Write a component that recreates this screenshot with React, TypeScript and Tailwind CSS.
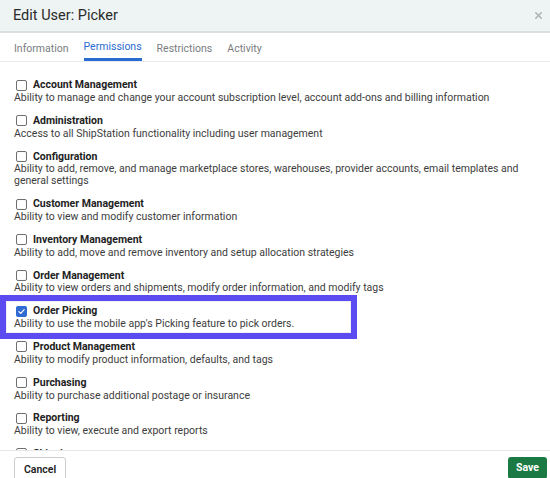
import { X } from "lucide-react";

const permissions = [
  {
    title: "Account Management",
    desc: "Ability to manage and change your account subscription level, account add-ons and billing information",
  },
  { title: "Administration", desc: "Access to all ShipStation functionality including user management" },
  {
    title: "Configuration",
    desc: "Ability to add, remove, and manage marketplace stores, warehouses, provider accounts, email templates and general settings",
  },
  { title: "Customer Management", desc: "Ability to view and modify customer information" },
  { title: "Inventory Management", desc: "Ability to add, move and remove inventory and setup allocation strategies" },
  {
    title: "Order Management",
    desc: "Ability to view orders and shipments, modify order information, and modify tags",
  },
  {
    title: "Order Picking",
    desc: "Ability to use the mobile app's Picking feature to pick orders.",
    checked: true,
    highlight: true,
  },
  { title: "Product Management", desc: "Ability to modify product information, defaults, and tags" },
  { title: "Purchasing", desc: "Ability to purchase additional postage or insurance" },
  { title: "Reporting", desc: "Ability to view, execute and export reports" },
  { title: "Shipping", desc: "Ability to create labels and ship orders" },
];

const tabs = ["Information", "Permissions", "Restrictions", "Activity"];

const Checkbox = ({ checked }: { checked?: boolean }) =>
  checked ? (
    <span className="flex h-[11px] w-[11px] items-center justify-center rounded-[2px] bg-[#2f6bd3]">
      <svg viewBox="0 0 12 12" className="h-[9px] w-[9px]" fill="none">
        <path d="M2.5 6.2 5 8.5 9.5 3.5" stroke="white" strokeWidth="1.6" strokeLinecap="round" strokeLinejoin="round" />
      </svg>
    </span>
  ) : (
    <span className="h-[11px] w-[11px] rounded-[2px] border border-[#6f6f6f] bg-white" />
  );

export default function App() {
  return (
    <div className="flex h-[478px] w-[550px] flex-col overflow-hidden bg-white font-['Roboto',sans-serif] text-[#2b2b2b]">
      {/* header */}
      <div className="flex h-[33px] shrink-0 items-center justify-between border-b-2 border-[#dcdfe1] bg-[#eef3f4] pl-[13px] pr-[6px]">
        <h1 className="text-[14.5px] text-[#2a2a2a]">Edit User: Picker</h1>
        <X className="h-[11px] w-[11px] text-[#a9adb0]" strokeWidth={3} />
      </div>

      {/* tabs */}
      <div className="flex h-[29px] shrink-0 items-stretch gap-[15px] border-b border-[#e6ecee] px-[14px]">
        {tabs.map((t) => (
          <div
            key={t}
            className={
              t === "Permissions"
                ? "flex items-center border-b-[3px] border-[#2a6bd1] pt-[3px] text-[10.5px] text-[#2a6bd1]"
                : "flex items-center pt-[3px] text-[10.5px] text-[#7a7d80]"
            }
          >
            {t}
          </div>
        ))}
      </div>

      {/* permission list */}
      <div className="flex-1 overflow-hidden px-[14px] pt-[16px]">
        {permissions.map((p) => (
          <div key={p.title} className="relative mb-[9.7px]">
            {p.highlight && (
              <span className="absolute -left-[14px] -top-[9px] h-[44px] w-[357px] border-[6px] border-[#5b4bf1] bg-white shadow-[inset_0_0_0_1px_#f0f0f2]" />
            )}
            <div className="relative flex h-[14px] items-center gap-[6px] pl-[2px]">
              <Checkbox checked={p.checked} />
              <span className="text-[10.5px] font-bold text-[#222]">{p.title}</span>
            </div>
            <p className="relative text-[10.5px] leading-[12px] text-[#3d3d3d]">{p.desc}</p>
          </div>
        ))}
      </div>

      {/* footer */}
      <div className="flex h-[28px] shrink-0 items-start justify-between border-t border-[#e4e8ea] px-[14px] pt-[6px]">
        <button className="h-[26px] rounded-[3px] border border-[#c9cdd0] bg-white px-[9px] text-[10.5px] font-semibold text-[#222]">
          Cancel
        </button>
        <button className="-mr-[11px] h-[22px] rounded-[3px] bg-[#1b7a43] px-[8px] text-[10.5px] font-bold text-white">
          Save
        </button>
      </div>
    </div>
  );
}
